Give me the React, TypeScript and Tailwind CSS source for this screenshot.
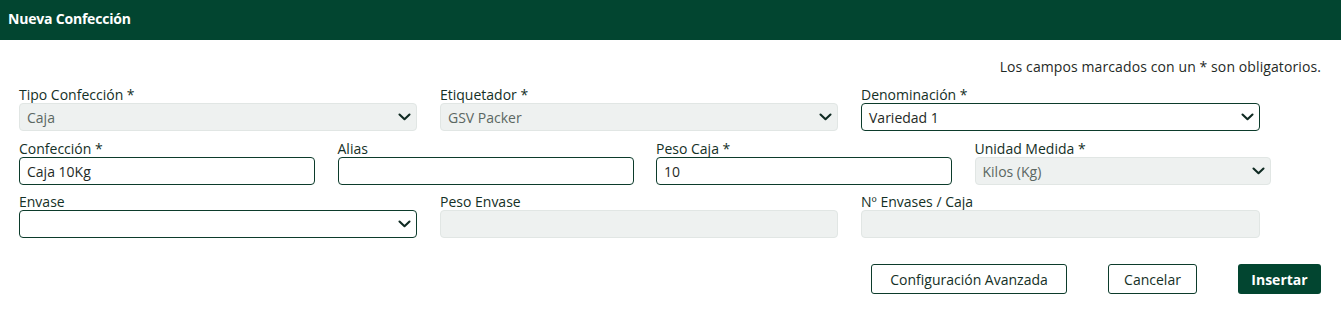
import React from "react";

const Chevron = () => (
  <svg width="13" height="8" viewBox="0 0 13 8" className="absolute right-[5px] top-1/2 -translate-y-1/2" fill="none">
    <path d="M1.5 1.5 L6.5 6.2 L11.5 1.5" stroke="#0f2a22" strokeWidth="2.1" strokeLinecap="round" strokeLinejoin="round" />
  </svg>
);

type FieldProps = { label: string; value?: string; select?: boolean; disabled?: boolean };

const Field = ({ label, value = "", select, disabled }: FieldProps) => (
  <div className="flex flex-col">
    <div className="h-[16px] text-[14px] leading-[16px] text-[#143026]">{label}</div>
    <div
      className={
        "relative h-[28px] rounded-[4px] flex items-center pl-[7px] text-[14px] " +
        (disabled
          ? "bg-[#eef1f0] border border-[#e1e6e4] text-[#5b6762]"
          : "bg-white border border-[#0c3b2b] text-[#1f2a26]")
      }
    >
      {value}
      {select && <Chevron />}
    </div>
  </div>
);

export default function App() {
  return (
    <div className="w-[1341px] h-[311px] bg-white" style={{ fontFamily: '"Open Sans", "Liberation Sans", sans-serif' }}>
      <div className="h-[40px] bg-[#024530] flex items-center px-[8px]">
        <span className="text-white font-bold text-[14px] tracking-[-0.2px] -mt-[4px]">Nueva Confección</span>
      </div>
      <div className="pl-[19px] pr-[20px]">
        <div className="pt-[19px] h-[47px] text-right text-[14px] text-[#1f2a26] leading-[16px] tracking-[0.1px]">
          Los campos marcados con un * son obligatorios.
        </div>
        <div className="grid grid-cols-[398px_398px_399px] gap-x-[23px]">
          <Field label="Tipo Confección *" value="Caja" select disabled />
          <Field label="Etiquetador *" value="GSV Packer" select disabled />
          <Field label="Denominación *" value="Variedad 1" select />
        </div>
        <div className="grid grid-cols-[296px_296px_296px_296px] gap-x-[22.5px] mt-[10px]">
          <Field label="Confección *" value="Caja 10Kg" />
          <Field label="Alias" />
          <Field label="Peso Caja *" value="10" />
          <Field label="Unidad Medida *" value="Kilos (Kg)" select disabled />
        </div>
        <div className="grid grid-cols-[398px_398px_399px] gap-x-[23px] mt-[9px]">
          <Field label="Envase" select />
          <Field label="Peso Envase" disabled />
          <Field label="Nº Envases / Caja" disabled />
        </div>
        <div className="flex justify-end mt-[26px]">
          <button className="h-[30px] w-[196px] border border-[#0c3b2b] rounded-[3px] text-[14px] text-[#143026] bg-white">
            Configuración Avanzada
          </button>
          <button className="h-[30px] w-[89px] ml-[41px] border border-[#0c3b2b] rounded-[3px] text-[14px] text-[#143026] bg-white">
            Cancelar
          </button>
          <button className="h-[30px] w-[83px] ml-[41px] rounded-[3px] text-[14px] font-bold text-white bg-[#024530]">
            Insertar
          </button>
        </div>
      </div>
    </div>
  );
}
